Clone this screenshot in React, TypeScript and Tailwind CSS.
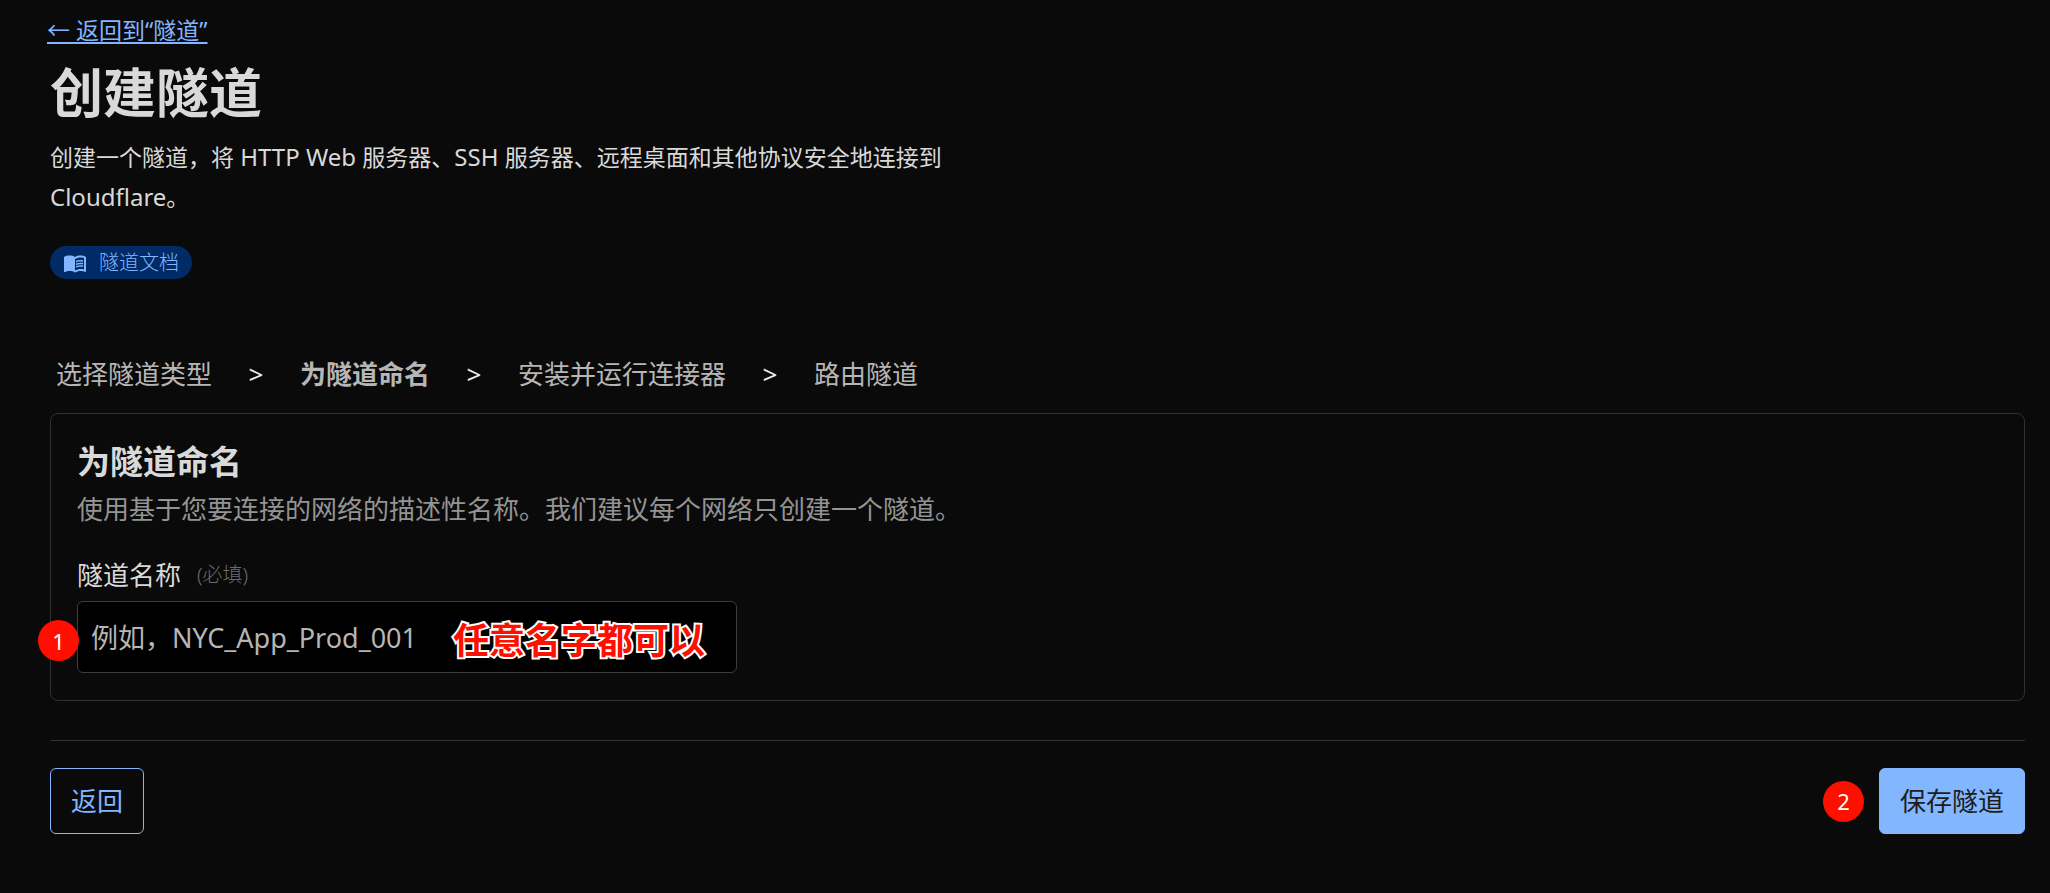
import { Fragment } from 'react';
import { MdMenuBook } from 'react-icons/md';

const steps = ['选择隧道类型', '为隧道命名', '安装并运行连接器', '路由隧道'];
const currentStep = 1;

function Marker({ value }: { value: number }) {
  return (
    <span className="flex size-[41px] items-center justify-center rounded-full bg-[#ff0f00] text-[22px] leading-none text-white">
      {value}
    </span>
  );
}

function Latin({ children }: { children: string }) {
  return <span className="text-2xl leading-none">{children}</span>;
}

function Stepper() {
  return (
    <nav aria-label="步骤" className="pl-1.5">
      <ol className="flex flex-wrap items-center text-[26px] leading-9 text-[#b6b6b6]">
        {steps.map((step, i) => (
          <Fragment key={step}>
            {i > 0 && (
              <li aria-hidden="true" className="w-22 text-center text-[26px] leading-9 text-[#ededed]">
                &gt;
              </li>
            )}
            <li
              aria-current={i === currentStep ? 'step' : undefined}
              className={i === currentStep ? 'font-bold' : 'font-normal'}
            >
              {step}
            </li>
          </Fragment>
        ))}
      </ol>
    </nav>
  );
}

export default function App() {
  return (
    <main
      lang="zh-CN"
      className="min-h-screen bg-[#0a0a0a] pt-3 pr-[25px] pb-14 pl-[50px] font-['Noto_Sans','Noto_Sans_CJK_SC',sans-serif] text-[#d9d9d9]"
    >
      <header className="flex flex-col items-start">
        <a
          href="#tunnels"
          className="-ml-[3px] text-[23px] leading-9 text-[#82b6ff] underline decoration-2 underline-offset-3"
        >
          ← 返回到“隧道”
        </a>
        <h1 className="mt-3 text-[53px] leading-[66px] font-bold">创建隧道</h1>
        <p className="mt-[11px] max-w-[920px] text-[23px] leading-10">
          创建一个隧道，将<Latin> HTTP Web </Latin>服务器、<Latin>SSH </Latin>
          服务器、远程桌面和其他协议安全地连接到 <Latin>Cloudflare</Latin>。
        </p>
        <a
          href="#docs"
          className="mt-[29px] flex h-[33px] items-center gap-3 rounded-full bg-[#002b66] px-[13px] text-xl leading-none font-light text-[#82b6ff]"
        >
          <MdMenuBook className="size-6" aria-hidden="true" />
          隧道文档
        </a>
      </header>

      <div className="mt-[77px]">
        <Stepper />
      </div>

      <section className="mt-[21px] rounded-lg border border-[#303030] px-[26px] pt-7 pb-[27px]">
        <h2 className="text-[33px] leading-10 font-bold">为隧道命名</h2>
        <p className="mt-[9px] text-[26px] leading-9 text-[#949494]">
          使用基于您要连接的网络的描述性名称。我们建议每个网络只创建一个隧道。
        </p>
        <label htmlFor="tunnel-name" className="mt-[30px] flex items-center gap-4 text-[26px] leading-9">
          隧道名称
          <span className="text-xl font-light text-[#6b6b6b]">(必填)</span>
        </label>
        <div className="relative mt-2 max-w-[660px]">
          <input
            id="tunnel-name"
            type="text"
            placeholder="例如，NYC_App_Prod_001"
            className="block h-[72px] w-full rounded-md border border-[#3c3c3c] bg-black px-[13px] text-[27px] outline-none placeholder:text-[#b6b6b6] focus:border-[#82b6ff]"
          />
          <span className="pointer-events-none absolute top-[19px] -left-[39px]">
            <Marker value={1} />
          </span>
          <span className="pointer-events-none absolute top-5 right-8 text-4xl leading-10 font-bold text-[#ff0f00] [-webkit-text-stroke:4px_white] [paint-order:stroke_fill]">
            任意名字都可以
          </span>
        </div>
      </section>

      <footer className="mt-[39px] flex items-center justify-between border-t border-[#303030] pt-[27px]">
        <button
          type="button"
          className="h-[66px] rounded-md border border-[#82b6ff] px-5 text-[26px] leading-9 text-[#82b6ff]"
        >
          返回
        </button>
        <div className="flex items-center gap-[15px]">
          <Marker value={2} />
          <button
            type="button"
            className="h-[66px] rounded-md border border-[#82b6ff] bg-[#82b6ff] px-5 text-[26px] leading-9 text-[#1d1d1d]"
          >
            保存隧道
          </button>
        </div>
      </footer>
    </main>
  );
}
